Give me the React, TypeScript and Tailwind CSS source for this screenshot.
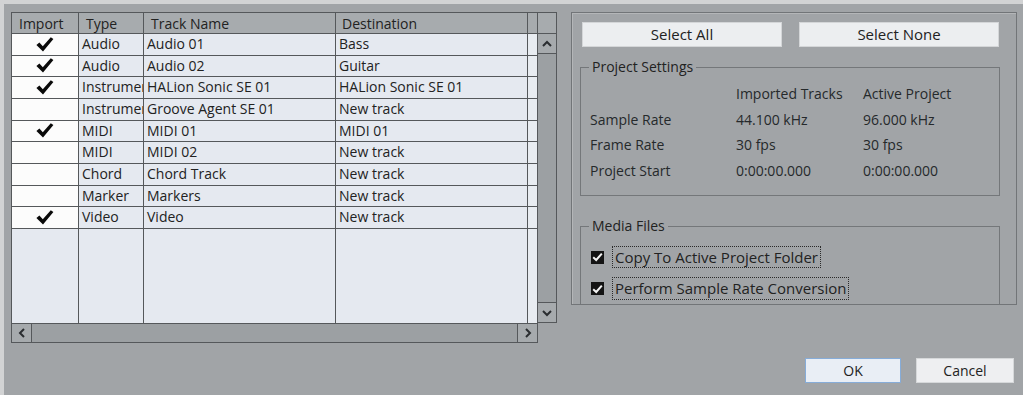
import React from "react";

const rows: [boolean, string, string, string][] = [
  [true, "Audio", "Audio 01", "Bass"],
  [true, "Audio", "Audio 02", "Guitar"],
  [true, "Instrument", "HALion Sonic SE 01", "HALion Sonic SE 01"],
  [false, "Instrument", "Groove Agent SE 01", "New track"],
  [true, "MIDI", "MIDI 01", "MIDI 01"],
  [false, "MIDI", "MIDI 02", "New track"],
  [false, "Chord", "Chord Track", "New track"],
  [false, "Marker", "Markers", "New track"],
  [true, "Video", "Video", "New track"],
];

function Check() {
  return (
    <svg width="18" height="15" viewBox="0 0 18 15">
      <path d="M0.4 8 L3.4 5.6 L6.8 9.2 L14.8 0.3 L17.4 2.1 L7 14.6 Z" fill="#0a0a0a" />
    </svg>
  );
}

function Chevron({ dir }: { dir: "up" | "down" | "left" | "right" }) {
  const d =
    dir === "up"
      ? "M1 6 L5 2 L9 6"
      : dir === "down"
      ? "M1 2 L5 6 L9 2"
      : dir === "left"
      ? "M6 1 L2 5 L6 9"
      : "M2 1 L6 5 L2 9";
  const w = dir === "up" || dir === "down" ? 10 : 8;
  const h = dir === "up" || dir === "down" ? 8 : 10;
  return (
    <svg width={w} height={h} viewBox={`0 0 ${w} ${h}`}>
      <path d={d} fill="none" stroke="#2a2d30" strokeWidth="2" />
    </svg>
  );
}

function CheckBox() {
  return (
    <div className="w-[13px] h-[13px] bg-[#141414] flex items-center justify-center">
      <svg width="11" height="10" viewBox="0 0 11 10">
        <path d="M1.2 5.2 L4.2 8 L9.8 1.6" fill="none" stroke="#f4f4f4" strokeWidth="2" />
      </svg>
    </div>
  );
}

const line = "border-[#55585b]";

export default function App() {
  return (
    <div
      className="w-[1023px] h-[395px] bg-[#a1a4a7] border-t-[4px] border-l-[4px] border-[#d2d3d4] pt-[8px] pl-[7px] flex flex-col text-[14px] text-[#222]"
      style={{ fontFamily: '"Open Sans", "Noto Sans", sans-serif' }}
    >
      <div className="flex items-start gap-[14px] h-[331px]">
        {/* Left table */}
        <div className="w-[546px] h-[331px] flex flex-col">
          {/* Header */}
          <div className={`flex h-[22px] border-t border-l ${line} bg-[#a7abae] leading-[22px]`}>
            <div className={`w-[67px] border-r border-b ${line} pl-[7px]`}>Import</div>
            <div className={`w-[65px] border-r border-b ${line} pl-[7px]`}>Type</div>
            <div className={`w-[192px] border-r border-b ${line} pl-[7px]`}>Track Name</div>
            <div className={`w-[192px] border-r border-b ${line} pl-[6px]`}>Destination</div>
            <div className={`w-[10px] border-r border-b ${line}`}></div>
            <div className={`w-[19px] border-r border-b ${line}`}></div>
          </div>
          {/* Body */}
          <div className="flex flex-1 min-h-0">
            <div className={`w-[527px] flex flex-col border-l ${line}`}>
              {rows.map(([imp, type, name, dest], i) => (
                <div key={i} className="flex h-[21.67px] leading-[20px] whitespace-nowrap">
                  <div className={`w-[67px] border-r border-b ${line} bg-[#fcfcfc] flex items-center justify-center`}>
                    {imp ? <Check /> : null}
                  </div>
                  <div className={`w-[65px] border-r border-b ${line} bg-[#e5e9f0] pl-[3px] overflow-hidden`}>{type}</div>
                  <div className={`w-[192px] border-r border-b ${line} bg-[#e5e9f0] pl-[3px] overflow-hidden`}>{name}</div>
                  <div className={`w-[192px] border-r border-b ${line} bg-[#e5e9f0] pl-[3px] overflow-hidden`}>{dest}</div>
                  <div className={`w-[10px] border-r border-b ${line} bg-[#e8ecf1]`}></div>
                </div>
              ))}
              <div className="flex flex-1">
                <div className={`w-[67px] border-r ${line} bg-[#e5e9f0]`}></div>
                <div className={`w-[65px] border-r ${line} bg-[#e5e9f0]`}></div>
                <div className={`w-[192px] border-r ${line} bg-[#e5e9f0]`}></div>
                <div className={`w-[192px] border-r ${line} bg-[#e5e9f0]`}></div>
                <div className={`w-[10px] border-r ${line} bg-[#e8ecf1]`}></div>
              </div>
            </div>
            {/* Vertical scrollbar */}
            <div className={`w-[19px] flex flex-col border-r border-b ${line} bg-[#9ca0a3]`}>
              <div className={`h-[20px] border-b ${line} bg-[#a6aaad] flex items-center justify-center`}>
                <Chevron dir="up" />
              </div>
              <div className="flex-1"></div>
              <div className={`h-[20px] border-t ${line} bg-[#a6aaad] flex items-center justify-center`}>
                <Chevron dir="down" />
              </div>
            </div>
          </div>
          {/* Horizontal scrollbar */}
          <div className="flex h-[20px]">
            <div className={`w-[527px] flex border ${line} bg-[#9ca0a3]`}>
              <div className={`w-[20px] border-r ${line} bg-[#a6aaad] flex items-center justify-center`}>
                <Chevron dir="left" />
              </div>
              <div className="flex-1"></div>
              <div className={`w-[20px] border-l ${line} bg-[#a6aaad] flex items-center justify-center`}>
                <Chevron dir="right" />
              </div>
            </div>
          </div>
        </div>

        {/* Right group box */}
        <div className="w-[446px] h-[293px] border border-[#727578] shadow-[inset_1px_1px_0_#b4b6b8] overflow-hidden px-[8px] pt-[9px] flex flex-col">
          <div className="flex gap-[17px] pl-[2px]">
            <div className="w-[200px] h-[25px] bg-[#eceef0] border border-[#d4d6d8] flex items-center justify-center text-[15px]">
              Select All
            </div>
            <div className="w-[200px] h-[25px] bg-[#eceef0] border border-[#d4d6d8] flex items-center justify-center text-[15px]">
              Select None
            </div>
          </div>

          {/* Project Settings */}
          <div className="relative mt-[20px] w-[420px] h-[129px] border border-[#74777a] shrink-0">
            <span className="absolute -top-[11px] left-[8px] px-[3px] bg-[#a1a4a7] leading-[20px]">Project Settings</span>
            <div className="grid grid-cols-[146px_127px_1fr] pl-[9px] pt-[13px] leading-[25.7px] text-[#25292b]">
              <div></div>
              <div>Imported Tracks</div>
              <div>Active Project</div>
              <div>Sample Rate</div>
              <div>44.100 kHz</div>
              <div>96.000 kHz</div>
              <div>Frame Rate</div>
              <div>30 fps</div>
              <div>30 fps</div>
              <div>Project Start</div>
              <div>0:00:00.000</div>
              <div>0:00:00.000</div>
            </div>
          </div>

          {/* Media Files */}
          <div className="relative mt-[30px] w-[420px] h-[110px] border border-[#74777a] shrink-0">
            <span className="absolute -top-[11px] left-[8px] px-[3px] bg-[#a1a4a7] leading-[20px]">Media Files</span>
            <div className="flex flex-col gap-[9px] pl-[10px] pt-[19px] text-[15px]">
              <div className="flex items-center h-[22px]">
                <CheckBox />
                <div className="ml-[8px] h-[22px] border border-dotted border-[#2a2a2a] px-[2px] leading-[20px]">
                  Copy To Active Project Folder
                </div>
              </div>
              <div className="flex items-center h-[23px]">
                <CheckBox />
                <div className="ml-[8px] h-[23px] border border-dotted border-[#2a2a2a] px-[2px] leading-[21px]">
                  Perform Sample Rate Conversion
                </div>
              </div>
            </div>
          </div>
        </div>
      </div>

      {/* Bottom buttons */}
      <div className="flex justify-end gap-[15px] pr-[9px] mt-[15px]">
        <div className="w-[96px] h-[25px] bg-[#e9eef5] border border-[#86acd8] flex items-center justify-center">OK</div>
        <div className="w-[98px] h-[25px] bg-[#eeeff1] border border-[#d6d8da] flex items-center justify-center">Cancel</div>
      </div>
    </div>
  );
}
